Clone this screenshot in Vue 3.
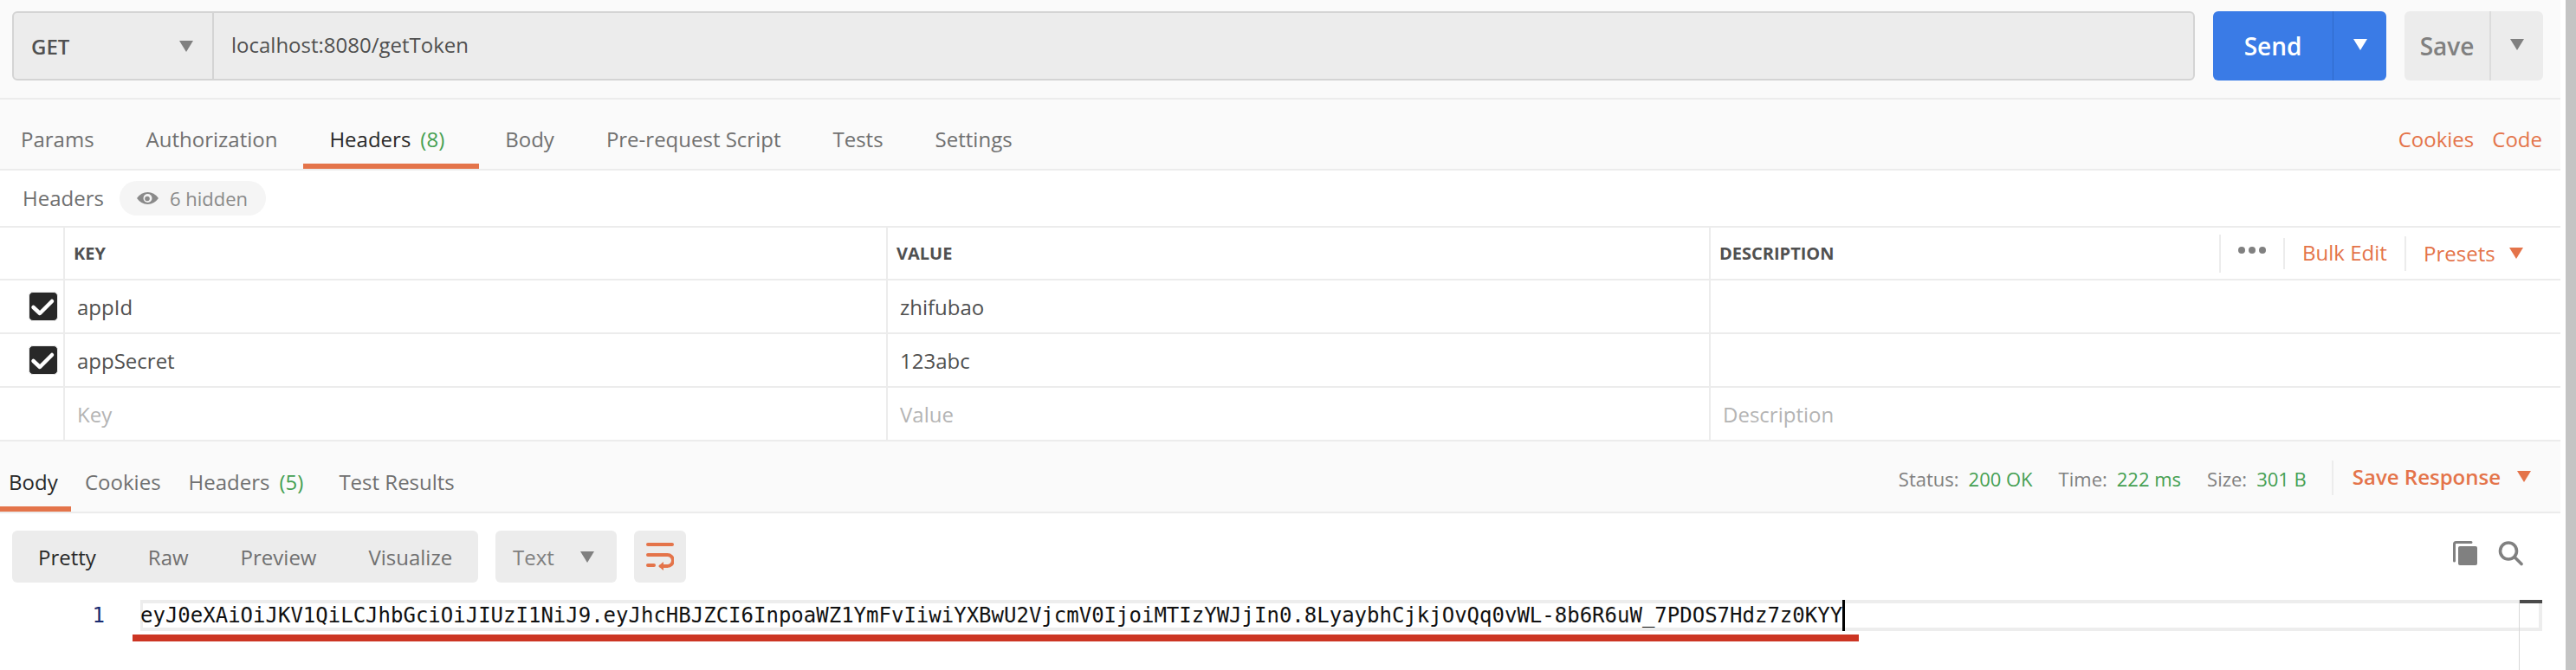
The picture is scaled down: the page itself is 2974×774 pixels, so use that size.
<template>
  <div class="page">
    <main class="main">
      <section class="url-bar">
        <div class="url-box">
          <div class="method"><span>GET</span><i class="tri gray"></i></div>
          <div class="url">localhost:8080/getToken</div>
        </div>
        <div class="send">
          <span class="send-label">Send</span>
          <span class="send-arrow"><i class="tri white"></i></span>
        </div>
        <div class="save">
          <span class="save-label">Save</span>
          <span class="save-arrow"><i class="tri gray"></i></span>
        </div>
      </section>

      <nav class="req-tabs">
        <div
          v-for="tab in requestTabs"
          :key="tab.name"
          class="req-tab"
          :class="{ active: tab.active }"
        >
          {{ tab.name }}<span v-if="tab.count" class="count">({{ tab.count }})</span>
        </div>
        <div class="links">
          <span>Cookies</span>
          <span>Code</span>
        </div>
      </nav>

      <div class="headers-title">
        <span>Headers</span>
        <div class="hidden-pill">
          <svg width="25" height="14" viewBox="0 0 25 14">
            <path d="M0 7 Q5 0 12.5 0 Q20 0 25 7 Q20 14 12.5 14 Q5 14 0 7 Z" fill="#8a8a8a" />
            <circle cx="12.5" cy="7" r="5" fill="#f5f5f5" />
            <circle cx="12" cy="7.5" r="2.8" fill="#8a8a8a" />
          </svg>
          <span>6 hidden</span>
        </div>
      </div>

      <div class="table">
        <div class="row head">
          <div class="cell check"></div>
          <div class="cell">KEY</div>
          <div class="cell">VALUE</div>
          <div class="cell desc-head">
            <span>DESCRIPTION</span>
            <div class="head-actions">
              <div class="dots"><i></i><i></i><i></i></div>
              <div class="bulk">Bulk Edit</div>
              <div class="presets">Presets<i class="tri orange"></i></div>
            </div>
          </div>
        </div>
        <div v-for="row in rows" :key="row.key" class="row">
          <div class="cell check">
            <span v-if="row.on" class="box">
              <svg width="32" height="32" viewBox="0 0 32 32">
                <path d="M4.5 17 L12 24 L26 10" fill="none" stroke="#fff" stroke-width="4.5" stroke-linecap="round" stroke-linejoin="round" />
              </svg>
            </span>
          </div>
          <div class="cell text" :class="{ placeholder: row.placeholder }">{{ row.key }}</div>
          <div class="cell text" :class="{ placeholder: row.placeholder }">{{ row.value }}</div>
          <div class="cell text" :class="{ placeholder: row.placeholder }">{{ row.desc }}</div>
        </div>
      </div>

      <div class="res-tabs">
        <div class="res-tab active">Body</div>
        <div class="res-tab">Cookies</div>
        <div class="res-tab">Headers<span class="count">(5)</span></div>
        <div class="res-tab results">Test Results</div>
        <div class="res-meta">
          <span class="meta">Status:<b>200 OK</b></span>
          <span class="meta">Time:<b>222 ms</b></span>
          <span class="meta">Size:<b>301 B</b></span>
          <div class="save-response">Save Response<i class="tri orange"></i></div>
        </div>
      </div>

      <section class="response">
        <div class="toolbar">
          <div class="modes">
            <span
              v-for="mode in modes"
              :key="mode"
              class="mode"
              :class="{ active: mode === 'Pretty' }"
            >{{ mode }}</span>
          </div>
          <div class="format"><span>Text</span><i class="tri gray"></i></div>
          <div class="wrap">
            <svg width="32" height="33" viewBox="0 0 32 33">
              <rect x="0" y="0" width="32" height="4" rx="2" fill="#e4744a" />
              <path d="M2 14 H24.5 A6.5 6.5 0 0 1 24.5 27 H17" fill="none" stroke="#e4744a" stroke-width="4" stroke-linecap="round" />
              <path d="M20 22 L14 27 L20 32 Z" fill="#e4744a" />
              <rect x="0" y="24" width="11" height="4" rx="2" fill="#e4744a" />
            </svg>
          </div>
          <div class="tools">
            <svg width="29" height="29" viewBox="0 0 29 29">
              <path d="M1.5 23 V3.5 Q1.5 1.5 3.5 1.5 H21" fill="none" stroke="#808080" stroke-width="3" stroke-linecap="round" />
              <rect x="6" y="6" width="22" height="22" rx="2" fill="#808080" />
            </svg>
            <svg width="29" height="30" viewBox="0 0 29 30">
              <circle cx="12" cy="11.5" r="9.5" fill="none" stroke="#808080" stroke-width="3.6" />
              <path d="M19 18.5 L27 26.5" stroke="#808080" stroke-width="3.6" stroke-linecap="round" />
            </svg>
          </div>
        </div>

        <div class="editor">
          <span class="line-no">1</span>
          <div class="line">
            <span class="code">{{ token }}</span><i class="caret"></i>
            <i class="overview"></i>
          </div>
          <i class="ruler"></i>
        </div>
        <div class="underline"></div>
      </section>
    </main>
    <div class="scroll-gap"></div>
    <div class="scrollbar"></div>
  </div>
</template>

<script setup>
const requestTabs = [
  { name: 'Params' },
  { name: 'Authorization' },
  { name: 'Headers', count: 8, active: true },
  { name: 'Body' },
  { name: 'Pre-request Script' },
  { name: 'Tests' },
  { name: 'Settings' },
];

const rows = [
  { key: 'appId', value: 'zhifubao', desc: '', on: true },
  { key: 'appSecret', value: '123abc', desc: '', on: true },
  { key: 'Key', value: 'Value', desc: 'Description', placeholder: true },
];

const modes = ['Pretty', 'Raw', 'Preview', 'Visualize'];

const token =
  'eyJ0eXAiOiJKV1QiLCJhbGciOiJIUzI1NiJ9.eyJhcHBJZCI6InpoaWZ1YmFvIiwiYXBwU2VjcmV0IjoiMTIzYWJjIn0.8LyaybhCjkjOvQq0vWL-8b6R6uW_7PDOS7Hdz7z0KYY';
</script>

<style>
html,
body {
  background: #fff;
  overflow: hidden;
}
</style>

<style scoped>
.page {
  display: flex;
  width: 2974px;
  height: 774px;
  overflow: hidden;
  font-family: "Open Sans", "Noto Sans", sans-serif;
  font-size: 24px;
  color: #505050;
  background: #fff;
}
.main {
  width: 2956px;
  flex: none;
  display: flex;
  flex-direction: column;
}
.scroll-gap {
  width: 6px;
  flex: none;
}
.scrollbar {
  width: 12px;
  flex: none;
  background: #c4c4c4;
}

.tri {
  display: block;
  width: 0;
  height: 0;
  border-left: 8px solid transparent;
  border-right: 8px solid transparent;
  border-top: 13px solid #808080;
}
.tri.white { border-top-color: #fff; }
.tri.orange { border-top-color: #e4744a; }

.url-bar {
  height: 115px;
  box-sizing: border-box;
  padding: 13px 0 0 14px;
  display: flex;
  background: #fafafa;
  border-bottom: 2px solid #ececec;
}
.url-box {
  width: 2520px;
  height: 80px;
  box-sizing: border-box;
  display: flex;
  background: #ececec;
  border: 2px solid #d4d4d4;
  border-radius: 6px;
}
.method {
  width: 231px;
  flex: none;
  box-sizing: border-box;
  border-right: 2px solid #d4d4d4;
  display: flex;
  align-items: center;
  justify-content: space-between;
  padding: 0 22px 0 20px;
  font-weight: 600;
  color: #505050;
}
.url {
  padding: 0 0 4px 20px;
  display: flex;
  align-items: center;
  color: #505050;
}
.send {
  margin-left: 21px;
  width: 200px;
  height: 80px;
  display: flex;
  background: #3a7be6;
  border-radius: 6px;
  color: #fff;
  font-weight: 600;
  font-size: 28px;
}
.send-label {
  width: 139px;
  box-sizing: border-box;
  border-right: 1px solid #2f69c8;
  display: flex;
  align-items: center;
  justify-content: center;
}
.send-arrow,
.save-arrow {
  flex: 1;
  display: flex;
  align-items: center;
  justify-content: center;
  padding-bottom: 4px;
}
.save {
  margin-left: 21px;
  width: 160px;
  height: 80px;
  display: flex;
  background: #ececec;
  border-radius: 6px;
  color: #808080;
  font-weight: 600;
  font-size: 28px;
}
.save-label {
  width: 100px;
  box-sizing: border-box;
  border-right: 2px solid #dcdcdc;
  display: flex;
  align-items: center;
  justify-content: center;
}

.req-tabs {
  height: 82px;
  box-sizing: border-box;
  display: flex;
  background: #fafafa;
  border-bottom: 2px solid #ececec;
}
.req-tab {
  height: 80px;
  box-sizing: border-box;
  padding: 31px 30px 0;
  line-height: 30px;
  color: #707070;
  white-space: nowrap;
}
.req-tab:first-child { padding-left: 24px; }
.req-tab.active {
  padding-right: 40px;
  color: #282828;
  border-bottom: 6px solid #e4744a;
}
.count {
  margin-left: 11px;
  color: #45a052;
}
.links {
  margin-left: auto;
  display: flex;
  gap: 21px;
  padding: 31px 21px 0 0;
  line-height: 30px;
  color: #e4744a;
}

.headers-title {
  height: 66px;
  box-sizing: border-box;
  display: flex;
  align-items: center;
  padding: 0 0 1px 26px;
  gap: 18px;
  color: #707070;
  border-bottom: 2px solid #ececec;
}
.hidden-pill {
  width: 169px;
  height: 40px;
  box-sizing: border-box;
  padding-left: 20px;
  display: flex;
  align-items: center;
  gap: 13px;
  border-radius: 20px;
  background: #f5f5f5;
  font-size: 22px;
  color: #8a8a8a;
}

.table { display: flex; flex-direction: column; }
.row {
  height: 62px;
  box-sizing: border-box;
  display: grid;
  grid-template-columns: 75px 950px 950px 1fr;
  border-bottom: 2px solid #ececec;
}
.row.head {
  font-size: 20px;
  font-weight: 700;
  color: #505050;
  height: 61px;
}
.cell {
  box-sizing: border-box;
  border-right: 2px solid #ececec;
  padding-left: 10px;
  display: flex;
  align-items: center;
}
.cell:last-child { border-right: none; }
.cell.text { padding-left: 14px; font-size: 24px; color: #505050; }
.cell.placeholder { color: #b4b4b4; }
.cell.check {
  padding: 0 0 0 33px;
}
.box {
  width: 34px;
  height: 34px;
  box-sizing: border-box;
  border: 1px solid #ececec;
  border-radius: 5px;
  background: #282828;
  display: flex;
}
.desc-head { justify-content: space-between; padding-right: 0; }
.head-actions {
  display: flex;
  align-items: center;
  font-weight: 400;
  font-size: 24px;
  color: #e4744a;
}
.dots {
  width: 74px;
  height: 44px;
  box-sizing: border-box;
  border-left: 2px solid #ececec;
  display: flex;
  justify-content: center;
  align-items: center;
  gap: 4px;
  padding-bottom: 8px;
}
.dots i {
  width: 8px;
  height: 8px;
  border-radius: 50%;
  background: #808080;
}
.bulk {
  width: 140px;
  height: 36px;
  box-sizing: border-box;
  border-left: 2px solid #ececec;
  padding-left: 20px;
  line-height: 34px;
}
.presets {
  width: 180px;
  height: 40px;
  box-sizing: border-box;
  border-left: 2px solid #ececec;
  padding-left: 20px;
  display: flex;
  align-items: center;
  gap: 16px;
}

.res-tabs {
  height: 83px;
  box-sizing: border-box;
  display: flex;
  background: #fafafa;
  border-bottom: 2px solid #ececec;
}
.res-tab {
  height: 81px;
  box-sizing: border-box;
  padding: 32px 16px 0 16px;
  line-height: 30px;
  color: #707070;
  white-space: nowrap;
}
.res-tab:first-child { padding-left: 10px; width: 82px; }
.res-tab.active {
  color: #282828;
  border-bottom: 6px solid #e4744a;
}
.res-tab.results { padding-left: 25px; }
.res-meta {
  margin-left: auto;
  display: flex;
  align-items: flex-start;
  padding-top: 28px;
  font-size: 22px;
  color: #808080;
}
.meta {
  margin-right: 30px;
  line-height: 30px;
}
.meta b {
  font-weight: 400;
  color: #45a052;
  margin-left: 11px;
}
.meta:nth-child(3) { margin-right: 29px; }
.save-response {
  margin-top: -6px;
  height: 40px;
  box-sizing: border-box;
  padding: 0 34px 4px 22px;
  border-left: 2px solid #ececec;
  display: flex;
  align-items: center;
  gap: 19px;
  font-size: 24px;
  font-weight: 600;
  color: #e4744a;
}

.response {
  flex: 1;
  background: #fff;
  padding-top: 20px;
  display: flex;
  flex-direction: column;
  position: relative;
}
.toolbar {
  height: 60px;
  display: flex;
  padding-left: 14px;
  gap: 20px;
}
.modes {
  width: 538px;
  display: flex;
  align-items: center;
  padding-left: 30px;
  box-sizing: border-box;
  gap: 60px;
  background: #ececec;
  border-radius: 6px;
  color: #707070;
}
.mode.active { color: #282828; }
.format {
  width: 140px;
  box-sizing: border-box;
  padding: 0 26px 0 20px;
  display: flex;
  align-items: center;
  justify-content: space-between;
  background: #ececec;
  border-radius: 6px;
  color: #808080;
}
.wrap {
  width: 60px;
  display: flex;
  justify-content: center;
  padding-top: 14px;
  box-sizing: border-box;
  background: #ececec;
  border-radius: 6px;
}
.tools {
  margin-left: auto;
  margin-right: 43px;
  margin-top: 12px;
  display: flex;
  gap: 23px;
  align-items: flex-start;
}

.editor {
  margin-top: 20px;
  display: flex;
}
.line-no {
  width: 162px;
  flex: none;
  box-sizing: border-box;
  padding: 0 41px 0 0;
  text-align: right;
  line-height: 36px;
  color: #1a2a70;
  font-family: "DejaVu Sans Mono", monospace;
  font-size: 24px;
}
.line {
  position: relative;
  width: 2773px;
  height: 36px;
  box-sizing: border-box;
  border: 4px solid #ededed;
  border-left-width: 3px;
  display: flex;
  align-items: center;
}
.code {
  font-family: "DejaVu Sans Mono", monospace;
  font-size: 24px;
  line-height: 28px;
  color: #111;
  white-space: pre;
  margin-left: -3px;
}
.caret {
  width: 3px;
  height: 36px;
  flex: none;
  background: #000;
}
.overview {
  position: absolute;
  top: -4px;
  right: -4px;
  width: 27px;
  height: 4px;
  background: #4a4a4a;
}
.ruler {
  position: absolute;
  top: 100px;
  bottom: 0;
  left: 2908px;
  width: 1px;
  background: #d8d8d8;
}
.underline {
  margin: 4px 0 0 153px;
  width: 1993px;
  height: 8px;
  background: #cc3523;
}
</style>
